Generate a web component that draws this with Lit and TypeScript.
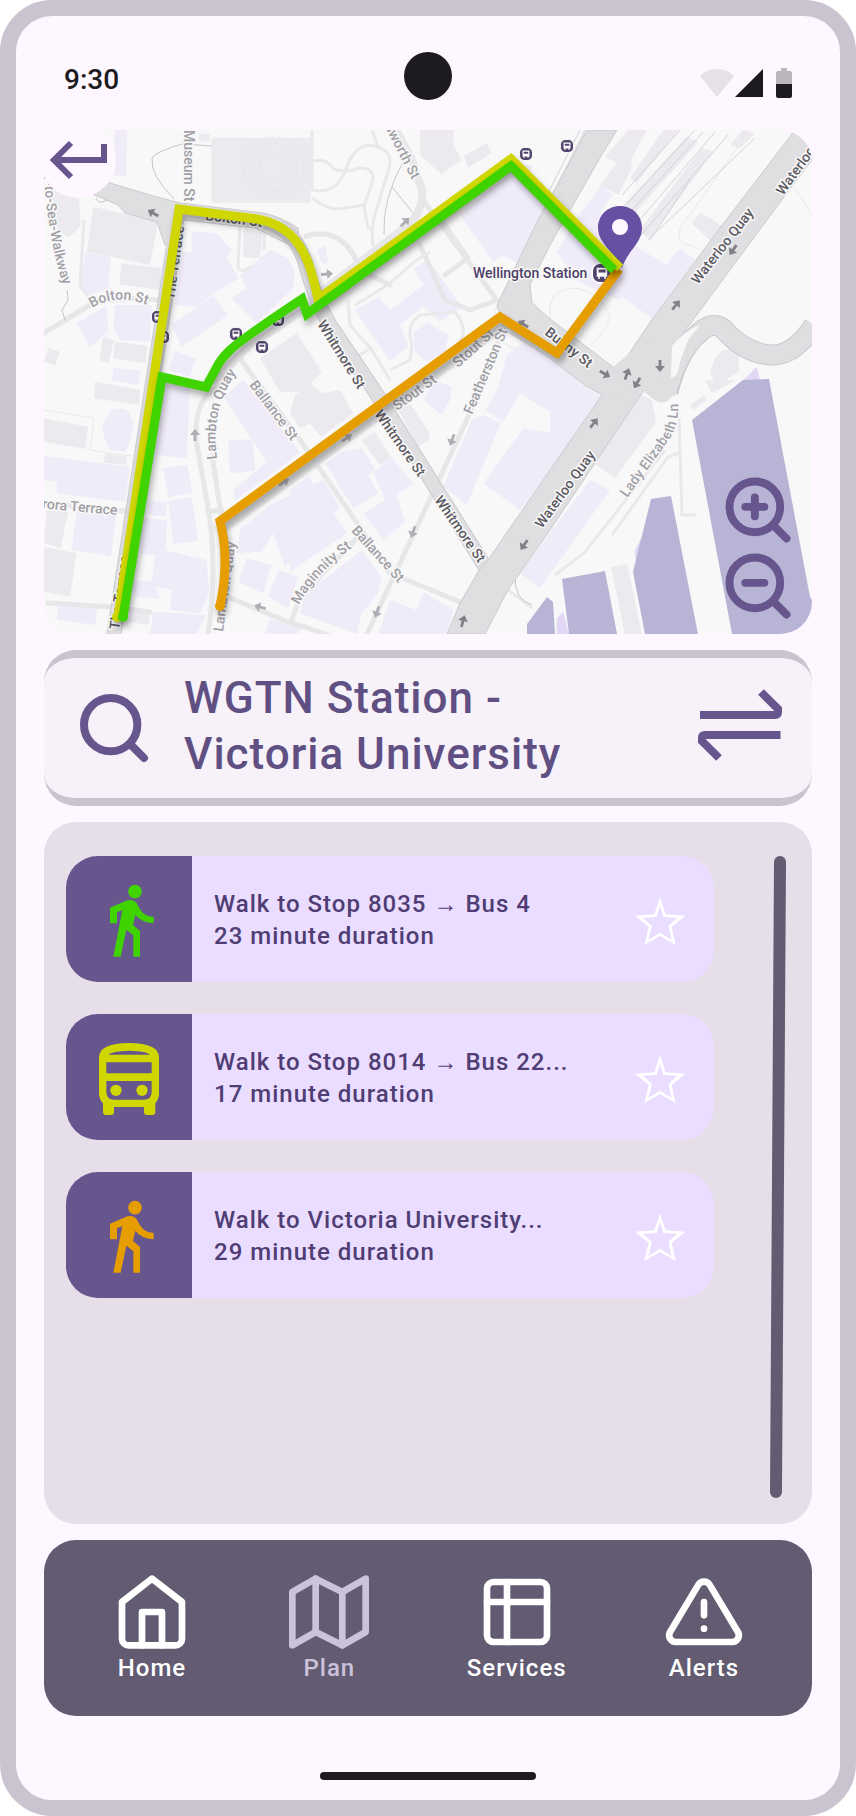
import { LitElement, html, svg, css } from "lit";
import { customElement, property } from "lit/decorators.js";

interface Trip {
  icon: "walk" | "bus";
  tone: "green" | "yellow" | "orange";
  title: string;
  duration: string;
}

const TRIPS: Trip[] = [
  { icon: "walk", tone: "green", title: "Walk to Stop 8035 → Bus 4", duration: "23 minute duration" },
  { icon: "bus", tone: "yellow", title: "Walk to Stop 8014 → Bus 22...", duration: "17 minute duration" },
  { icon: "walk", tone: "orange", title: "Walk to Victoria University...", duration: "29 minute duration" },
];

const TABS = [
  {
    label: "Home",
    current: false,
    art: svg`<path d="M3 9l9-7 9 7v11a2 2 0 0 1-2 2H5a2 2 0 0 1-2-2z"/><path d="M9 22V12h6v10"/>`,
  },
  {
    label: "Plan",
    current: true,
    art: svg`<path d="M1 6v16l7-4 8 4 7-4V2l-7 4-8-4-7 4z"/><path d="M8 2v16M16 6v16"/>`,
  },
  {
    label: "Services",
    current: false,
    art: svg`<rect x="3" y="3" width="18" height="18" rx="2"/><path d="M3 9h18M9 3v18"/>`,
  },
  {
    label: "Alerts",
    current: false,
    art: svg`<path d="M10.29 3.86L1.82 18a2 2 0 0 0 1.71 3h16.94a2 2 0 0 0 1.71-3L13.71 3.86a2 2 0 0 0-3.42 0z"/><path d="M12 9v4M12 17h.01"/>`,
  },
];

/* One-way arrows: x, y, heading in degrees clockwise from north. */
const ARROWS: [number, number, number, string][] = [
  [153, 213, -60, "dark"],
  [327, 274, 85, "mid"],
  [405, 222, 45, "mid"],
  [676, 305, 38, "dark"],
  [733, 250, 215, "dark"],
  [605, 374, 120, "dark"],
  [627, 374, 20, "dark"],
  [637, 383, 210, "dark"],
  [660, 366, 180, "dark"],
  [594, 423, 38, "dark"],
  [524, 545, 215, "dark"],
  [463, 621, 15, "dark"],
  [452, 440, 200, "mid"],
  [413, 532, 200, "mid"],
  [377, 612, 200, "mid"],
  [347, 438, 55, "mid"],
  [284, 482, 55, "mid"],
  [195, 435, 0, "mid"],
  [260, 607, -75, "mid"],
  [523, 324, -60, "dark"],
];

const STOPS: [number, number, number][] = [
  [158, 317, 6],
  [163, 337, 6],
  [236, 334, 6],
  [262, 347, 6],
  [278, 320, 6],
  [526, 154, 6],
  [567, 146, 6],
  [602, 273, 9],
];

@customElement("trip-map")
export class TripMap extends LitElement {
  static styles = css`
    :host {
      display: block;
      position: relative;
      font-family: Roboto, "Liberation Sans", sans-serif;
    }
    .map {
      display: block;
      width: 100%;
      height: auto;
      border-radius: 32px;
    }
    .land { fill: #f8f8f8; }
    .grey { fill: #eceaee; }
    .lilac { fill: #f0ebf9; }
    .violet { fill: #e2d8f6; }
    .water { fill: #b8b4d5; }
    .road { fill: #dfdfe1; stroke: #cbcad0; stroke-width: 1; }
    .fill-road { fill: #dfdfe1; }
    .street { fill: none; stroke: #e7e6e8; stroke-linecap: round; stroke-linejoin: round; stroke-width: 5; }
    .wide { stroke-width: 8; }
    .avenue { fill: none; stroke: #dfdfe1; stroke-width: 13; stroke-linejoin: round; }
    .casing { fill: none; stroke: #cbcad0; stroke-width: 15; stroke-linejoin: round; }
    .quay { stroke-width: 19; }
    .quay-casing { stroke-width: 21; }
    .track { fill: none; stroke: #d3d2d8; stroke-width: 1; }
    .path { fill: none; stroke: #c6c4cd; stroke-width: 1; }
    .lane { fill: none; stroke: #e9e9eb; stroke-width: 3; }
    .faint { stroke-width: 1; }
    .ring { fill: none; stroke: #e3e1e6; stroke-width: 1; stroke-dasharray: 3 3; }
    .name {
      font-size: 14px;
      font-weight: 500;
      fill: #a19fa6;
      stroke: #f8f8f8;
      stroke-width: 3;
      paint-order: stroke;
      stroke-linejoin: round;
    }
    .strong { fill: #5c5a62; }
    .place { fill: #4e4168; }
    .end { text-anchor: end; }
    .dark { fill: #828088; }
    .mid { fill: #b0aeb5; }
    .stop { fill: #52466f; stroke: #ffffff; stroke-width: 1; }
    .glyph { fill: #ffffff; fill-rule: evenodd; }
    .pin { fill: #6750a4; }
    .hole { fill: #fef7ff; }
    .route {
      fill: none;
      stroke-width: 9;
      stroke-linecap: butt;
      filter: drop-shadow(2px 5px 3px rgba(0, 0, 0, 0.3));
    }
    .green { stroke: #3fd300; }
    .yellow { stroke: #cfd600; }
    .orange { stroke: #e69d00; }
    .cap-green { fill: #3fd300; }
    .cap-yellow { fill: #cfd600; }
    .cap-orange { fill: #e69d00; }
    button {
      display: block;
      border: 0;
      padding: 0;
      background: none;
      color: #67558d;
      cursor: pointer;
    }
    .back {
      position: absolute;
      left: -4px;
      top: -8px;
      width: 76px;
      height: 76px;
      border-radius: 50%;
      background: #fef7ff;
    }
    .zoom {
      position: absolute;
      right: 16px;
      bottom: 10px;
    }
    .icon {
      display: block;
      width: 76px;
      height: 76px;
      fill: none;
      stroke: currentColor;
      stroke-linecap: round;
    }
    .lens { stroke-width: 2.5; }
    .arrow { stroke-width: 6; stroke-linecap: butt; }
  `;

  private arrow([x, y, heading, tone]: [number, number, number, string]) {
    return svg`<path class=${tone} transform=${`translate(${x} ${y}) rotate(${heading})`}
      d="M0 -6L5 0H1.400V6H-1.400V0H-5Z"/>`;
  }

  private stop([x, y, r]: [number, number, number]) {
    return svg`<g transform=${`translate(${x} ${y}) scale(${r / 6})`}>
      <rect class="stop" x="-6.500" y="-6.500" width="13" height="13" rx="5"/>
      <path class="glyph" d="M-3.500 -3.500H3.500V2.500H2.500V4H1.500V2.500H-1.500V4H-2.500V2.500H-3.500ZM-2.300 -2.300V-.300H2.300V-2.300Z"/>
    </g>`;
  }

  private buildings() {
    return svg`
      <g transform="translate(40 125) scale(.33333)">
        <path class="grey" d="M515 38H812V233H515ZM160 245L355 290 330 420 140 380ZM25 170L115 200 122 300 105 322 85 335 55 320ZM245 415L365 430 360 495 238 478ZM225 650L322 662 318 715 220 700ZM190 635L222 645 205 715 178 705ZM25 668L60 680 45 722 12 710ZM610 310L668 320 660 400 610 395ZM478 25L510 28 508 50 478 48ZM660 700L770 625 845 740 790 800H720Z"/>
        <path class="lilac" d="M225 15H262L258 155 215 150ZM135 382L212 395 205 490 150 510 120 490ZM455 318L530 325 575 375 560 400 597 460 520 505 470 545 405 540 425 385 455 380ZM600 450L690 375 745 400 765 440 760 490 650 595 575 520 620 490ZM395 600L520 510 563 570 425 665ZM110 595L200 540 205 620 150 665ZM225 540L335 540 330 650 240 645 220 610ZM405 678L468 700 450 755 385 735ZM220 728L300 738 295 780 215 765Z"/>
      </g>
      <g transform="translate(290 125) scale(.33333)">
        <path class="grey" d="M390 15H492L490 60 515 105 455 148 390 90ZM522 92L590 55 605 85 535 128Z"/>
        <path class="lilac" d="M195 555L265 515 300 555 400 480 370 430 415 405 515 545 450 590 400 545 330 600 355 665 300 708ZM370 625L410 592 475 630 465 680 410 710 375 680ZM510 270L665 140 775 260 690 420 640 390 610 410ZM80 375L105 362 115 410 100 420 90 400ZM650 690L700 650 860 740 860 800H620ZM660 120L725 120 725 150Z"/>
      </g>
      <g transform="translate(550 125) scale(.33333)">
        <path class="grey" d="M165 95L235 15H290L245 100 245 130 205 210 150 180 200 115ZM340 15H385L260 175 240 160ZM410 35L445 50 250 270 220 240ZM455 70L490 80 300 340 265 320ZM425 295L452 262 520 305 485 350ZM480 745L495 700 520 675 565 670 568 740 500 780ZM540 60L580 15 615 25 570 70Z"/>
        <path class="lilac" d="M155 180L190 210 150 260 200 330 350 420 390 370 435 405 305 580 215 515 205 525 85 470 20 380 80 280Z"/>
      </g>
      <g transform="translate(40 380) scale(.33333)">
        <path class="grey" d="M165 5L300 30 298 75 162 55ZM12 115L145 140 135 207 12 185ZM195 220L262 230 258 255 192 248ZM20 390L85 392 62 505 12 490ZM12 500L110 520 90 650 12 635ZM270 690L332 695 325 735 265 725Z"/>
        <path class="lilac" d="M215 90Q240 80 265 92L280 130Q278 180 255 215L210 210Q185 170 188 130ZM12 228L270 260 255 365 50 340 50 305 12 300ZM110 390L230 405 212 528 95 510ZM375 0L450 20 440 235 345 225ZM370 265L442 255 458 338 385 352ZM385 362L455 352 475 482 400 492ZM330 362L382 365 378 410 325 405ZM305 412L382 420 375 530 300 520ZM345 530L375 510 500 540 508 640 480 700 390 690 395 630 345 620 360 655 280 650 275 600 335 605ZM55 675L172 688 165 735 50 720ZM340 695L500 705 470 762H330ZM565 180L638 178 645 272 570 280ZM550 50L610 0 780 215 720 265 585 360 580 330 680 245ZM600 450L690 375 850 300 900 380 780 520 735 560 700 460 665 515 590 520ZM620 535L695 555 670 640 595 605ZM715 570L775 590 745 685 685 650ZM690 715L780 750 770 762H675Z"/>
      </g>
      <g transform="translate(290 380) scale(.33333)">
        <path class="grey" d="M15 45L60 10 100 40 150 30 190 100 95 170 60 130 30 145 0 100ZM325 90L360 72 420 160 415 180 385 200ZM215 180L255 155 305 235 270 255Z"/>
        <path class="lilac" d="M105 250L160 215 215 205 255 265 235 285 265 340 190 385ZM250 275L305 235 372 310 320 345 345 425 280 480 220 400 285 360ZM0 330L55 290 172 460 0 575ZM100 600L215 510 275 590 265 640 215 700 200 762 30 700 50 620ZM400 60L430 0 485 20 480 60 455 105ZM585 90L640 0H860L850 120 770 90 690 40 640 125ZM545 120L580 105 632 130 530 375 460 320ZM580 310L700 145 860 170 690 390ZM300 660L380 690 400 635 490 690 470 762H265ZM690 580L780 460 900 300 960 330 750 625Z"/>
      </g>
      <g transform="translate(550 380) scale(.33333)">
        <path class="grey" d="M270 42L305 60 318 125 195 295 130 250ZM420 75L462 45 470 60 430 90ZM465 0H560L485 40ZM183 562L232 553 275 762H225Z"/>
        <path class="lilac" d="M0 0H70L155 50 80 150 0 265Z"/>
        <path class="violet" d="M20 715L40 695 57 762H20ZM560 20L620 -40 635 20ZM253 515L275 470 262 560Z"/>
      </g>
      <circle class="ring" cx="274" cy="167" r="30"/>
      <circle class="ring" cx="274" cy="167" r="24"/>
      <circle class="ring" cx="274" cy="167" r="14"/>`;
  }

  private streets() {
    return svg`
      <path class="street" d="M44 333L90 305Q112 296 158 300M238 356L300 440 357 523 390 573 460 602M357 538L300 597 291 622 330 636M48 603L112 607 150 612M228 597L300 627M44 503L124 511"/>
      <path class="street" d="M222 385Q194 395 196 440L208 507Q218 570 208 634M212 455L222 520 228 590M208 512L222 510M505 325L470 413 367 634"/>
      <path class="street" d="M423 200L497 300M441 220L468 258 445 275M420 245L445 300 470 310 497 300M306 236Q345 225 360 270L390 285"/>
      <path class="street wide" d="M215 380L250 345 310 306M222 530L505 325M320 293L412 222Q424 206 422 190L412 160 396 130"/>
      <path class="lane" d="M84 220L80 285 94 305M240 225L238 268Q242 274 252 266M265 222L264 250M312 131V190M312 161Q326 158 333 168Q342 174 360 168Q374 168 373 180L364 206 368 228 373 230M345 172Q352 148 368 145Q395 148 389 168L378 205Q370 225 373 246M312 190Q332 194 340 180L345 172M312 198Q330 212 345 208L364 205M372 130L378 147M348 300L350 325 372 350 390 380M355 305Q390 285 405 270Q418 258 430 252M352 360L372 347M390 370L410 360 412 345Q405 325 420 315L455 312Q470 330 458 345"/>
      <path class="lane faint" d="M44 410L94 418 90 450 132 456M551 345L550 310Q550 290 575 288Q600 292 610 315Q608 330 590 345M680 228Q676 245 690 245L706 252M750 130L680 228M812 215Q800 195 790 182M500 300Q480 340 520 350"/>
      <path class="lane" d="M679 418L682 515H696M679 453L668 457 612 535M665 450L585 552 555 575M508 590L532 608"/>
      <path class="path" d="M174 199Q150 175 152 158Q155 152 182 144L212 146M403 162Q382 200 384 235M392 187L413 213M96 198Q98 205 107 200M67 290L68 300 62 310 65 320M515 578Q515 600 532 605"/>
      <path class="track" d="M585 130L545 210M580 130L542 205M680 130L622 195M695 130L626 205M703 132L632 210M715 132L638 222M728 135L640 236M755 138L648 240M690 180L650 240"/>`;
  }

  private mainRoads() {
    return svg`
      <path class="road" d="M100 180L150 195 180 203 255 212Q285 218 298 228L300 250 255 228 184 220 175 250 165 245 157 222 125 213 118 205 90 193Z"/>
      <path class="casing" d="M173 250L113 640"/>
      <path class="avenue" d="M175 235L113 640"/>
      <path class="casing" d="M255 219Q292 222 305 262Q315 300 330 325L374 390 486 568"/>
      <path class="avenue" d="M255 219Q292 222 305 262Q315 300 330 325L374 390 486 568"/>
      <path class="road" d="M795 130L720 228 653 318 618 370 602 395 550 470 490 557 478 572 460 603 447 634H485L508 590 550 530 642 393 673 347 795 182 812 160V130Z"/>
      <path class="casing quay-casing" d="M668 392Q678 350 700 332Q716 318 728 334Q748 354 772 355Q795 355 814 325"/>
      <path class="road" d="M587 130H617L600 158 550 245 530 285 532 303 550 319 617 370 602 395 584 385 550 358 505 330 497 305 537 222Z"/>
      <path class="fill-road" d="M612 368L645 340 672 347V365L680 382Q668 412 652 398L638 386 606 397 596 388Z"/>
      <path class="avenue quay" d="M666 394Q678 350 700 332Q716 318 728 334Q748 354 772 355Q795 355 814 325"/>
      <path class="land" d="M672 346L671 378Q678 378 680 362L688 340 700 325Q685 330 672 346Z"/>`;
  }

  private water() {
    return svg`
      <path class="water" d="M692 420L743 380 769 379 810 597 812 600V634H732ZM651 499L671 496 698 634H645L633 572ZM562 579L605 571 617 634H569ZM527 624L547 597 553 602 555 634H527Z"/>`;
  }

  private names() {
    return svg`
      <defs>
        <path id="walkway" d="M41 120L45 190Q50 245 63 285"/>
        <path id="bolton" d="M92 308Q115 293 148 305"/>
        <path id="lambton" d="M217 459Q210 405 240 368"/>
        <path id="maginnity" d="M299 605Q316 572 356 545"/>
        <path id="elizabeth" d="M627 498L668 441Q680 425 678 400"/>
      </defs>
      <text class="name" transform="translate(184 130) rotate(90)">Museum St</text>
      <text class="name end"><textPath href="#walkway" startOffset="100%">City-to-Sea-Walkway</textPath></text>
      <text class="name"><textPath href="#bolton">Bolton St</textPath></text>
      <text class="name strong" transform="translate(205 220) rotate(7)">Bolton St</text>
      <text class="name strong" transform="translate(174 300) rotate(-82)">The Terrace</text>
      <text class="name strong" transform="translate(119 630) rotate(-82)">The Terrace</text>
      <text class="name end" transform="translate(117 515) rotate(5)">Aurora Terrace</text>
      <text class="name"><textPath href="#lambton">Lambton Quay</textPath></text>
      <text class="name" transform="translate(223 632) rotate(-82)">Lambton Quay</text>
      <text class="name" transform="translate(249 385) rotate(53)">Ballance St</text>
      <text class="name" transform="translate(351 531) rotate(48)">Ballance St</text>
      <text class="name"><textPath href="#maginnity">Maginnity St</textPath></text>
      <text class="name strong" transform="translate(317 324) rotate(58)">Whitmore St</text>
      <text class="name strong" transform="translate(374 414) rotate(55)">Whitmore St</text>
      <text class="name strong" transform="translate(434 500) rotate(55)">Whitmore St</text>
      <text class="name end" transform="translate(412 180) rotate(63)">Molesworth St</text>
      <text class="name" transform="translate(397 411) rotate(-36)">Stout St</text>
      <text class="name" transform="translate(458 368) rotate(-42)">Stout St</text>
      <text class="name" transform="translate(472 415) rotate(-67)">Featherston St</text>
      <text class="name strong" transform="translate(544 334) rotate(38)">Bunny St</text>
      <text class="name strong" transform="translate(698 285) rotate(-52)">Waterloo Quay</text>
      <text class="name strong" transform="translate(783 196) rotate(-54)">Waterloo Quay</text>
      <text class="name strong" transform="translate(542 529) rotate(-54)">Waterloo Quay</text>
      <text class="name"><textPath href="#elizabeth">Lady Elizabeth Ln</textPath></text>
      <text class="name place" x="473" y="278">Wellington Station</text>`;
  }

  render() {
    return html`
      <svg class="map" viewBox="44 130 768 504" role="img" aria-label="Map of routes to Wellington Station">
        <rect class="land" x="44" y="130" width="768" height="504" />
        ${this.buildings()} ${this.streets()} ${this.mainRoads()} ${this.water()}
        ${ARROWS.map((a) => this.arrow(a))} ${this.names()} ${STOPS.map((s) => this.stop(s))}
        <path class="pin" d="M620 206C607 206 598 216 598 228C598 244 615 252 622 268C628 250 642 243 642 228C642 216 633 206 620 206Z" />
        <circle class="hole" cx="620" cy="227" r="8" />
        <g class="route">
          <path class="orange" d="M220 606Q230 560 220 521L500 317 557 353 619 269" />
          <circle class="cap-orange" cx="220" cy="606" r="5" />
        </g>
        <g class="route">
          <path class="yellow" d="M118 617L179 209 257 219C285 224 300 240 309 265Q314 280 318 299L511 159 620 268" />
          <circle class="cap-yellow" cx="117" cy="617" r="5" />
        </g>
        <g class="route">
          <path class="green" d="M123 617L162 377 206 387 219 363Q223 357 229 351 240 340 302 299L307 314 511 166 614 270" />
          <circle class="cap-green" cx="123" cy="617" r="5" />
        </g>
      </svg>
      <button class="back" type="button" aria-label="Back">
        <svg class="icon arrow" viewBox="40 122 76 76"><path d="M104 144V160H55M71 143L54 160 71 177" /></svg>
      </button>
      <div class="zoom">
        <button type="button" aria-label="Zoom in">
          <svg class="icon lens" viewBox="0 0 24 24"><circle cx="11" cy="11" r="8" /><path d="M21 21L17 17M11 8v6M8 11h6" /></svg>
        </button>
        <button type="button" aria-label="Zoom out">
          <svg class="icon lens" viewBox="0 0 24 24"><circle cx="11" cy="11" r="8" /><path d="M21 21L17 17M8 11h6" /></svg>
        </button>
      </div>
    `;
  }
}

@customElement("trip-card")
export class TripCard extends LitElement {
  @property({ attribute: false }) trip!: Trip;

  static styles = css`
    :host {
      display: block;
      font-family: Roboto, "Liberation Sans", sans-serif;
    }
    .card {
      display: flex;
      align-items: center;
      gap: 22px;
      padding-right: 28px;
      border-radius: 32px;
      overflow: hidden;
      background: #eaddff;
      color: #4f3d74;
    }
    .badge {
      flex: none;
      width: 126px;
      height: 126px;
      background: #67558d;
    }
    .green { fill: #3fd300; }
    .yellow { fill: #cfd600; }
    .orange { fill: #e69d00; }
    .text {
      flex: 1;
      min-width: 0;
      padding-top: 2px;
      font-size: 24px;
      line-height: 32px;
      font-weight: 500;
      letter-spacing: 1px;
    }
    .text p { margin: 0; }
    .star {
      flex: none;
      border: 0;
      padding: 0;
      background: none;
      cursor: pointer;
    }
    .star svg {
      display: block;
      width: 50px;
      height: 50px;
      fill: #ffffff;
      fill-rule: evenodd;
    }
  `;

  private art() {
    return this.trip.icon === "walk"
      ? html`<svg class="badge ${this.trip.tone}" viewBox="78 108 378 378" aria-hidden="true">
          <circle cx="285" cy="215" r="20.500" />
          <path d="M210 263L262 241Q281 236 291 251C303 276 315 290 341 290V310Q305 308 286 285L279 315 300 333V410H280V346L259 329 242 410H220L247 270 231 277V310H210Z" />
        </svg>`
      : html`<svg class="badge ${this.trip.tone}" viewBox="78 582 378 378" fill-rule="evenodd" aria-hidden="true">
          <path d="M177 712Q177 670 267 669 357 670 357 712V820Q357 838 346 850V876Q346 885 337 885H321Q312 885 312 876V861H222V876Q222 885 213 885H198Q189 885 189 876V850Q177 838 177 820ZM205 704H330Q320 693 267 692 215 693 205 704ZM199 727V760H335V727ZM199 783V815Q199 839 223 839H311Q335 839 335 815V783Z" />
          <circle cx="228" cy="811" r="17" /><circle cx="306" cy="811" r="17" />
        </svg>`;
  }

  render() {
    return html`<article class="card">
      ${this.art()}
      <div class="text">
        <p>${this.trip.title}</p>
        <p>${this.trip.duration}</p>
      </div>
      <button class="star" type="button" aria-label="Save trip">
        <svg viewBox="588 223 150 150" overflow="visible">
          <path d="M660 233L677 284 736 288 695 322 707 376 660 349 613 376 626 322 585 288 643 284ZM660 258L650 292 608 294 636 318 625 361 660 339 695 361 685 318 712 294 670 292Z" />
        </svg>
      </button>
    </article>`;
  }
}

@customElement("app-root")
export class AppRoot extends LitElement {
  static styles = css`
    :host {
      display: block;
      background: #ffffff;
      font-family: Roboto, "Liberation Sans", sans-serif;
      font-weight: 500;
    }
    .phone {
      box-sizing: border-box;
      min-height: 100vh;
      display: flex;
      flex-direction: column;
      border: 16px solid #cac4d0;
      border-radius: 52px;
      background: #fef7ff;
    }
    .status {
      display: grid;
      grid-template-columns: 1fr auto 1fr;
      align-items: end;
      padding: 36px 48px 20px;
      color: #1d1b20;
      font-size: 28px;
      line-height: 40px;
    }
    .camera {
      width: 48px;
      height: 48px;
      border-radius: 50%;
      background: #1d1b20;
    }
    .signals {
      display: block;
      width: 92px;
      height: 32px;
      justify-self: end;
      fill: currentColor;
    }
    .screen {
      flex: 1;
      display: flex;
      flex-direction: column;
      gap: 16px;
      padding: 10px 28px 0;
    }
    .search {
      display: flex;
      align-items: center;
      gap: 30px;
      padding: 12px 30px;
      border: solid #cac4cf;
      border-width: 8px 0;
      border-radius: 32px;
      background: #f7f1f9;
      color: #67558d;
    }
    .lens {
      flex: none;
      width: 80px;
      height: 80px;
      fill: none;
      stroke: currentColor;
      stroke-width: 2.4;
      stroke-linecap: round;
    }
    .query {
      flex: 1;
      min-width: 0;
      display: block;
      height: 116px;
      border: 0;
      padding: 0;
      margin: 0;
      resize: none;
      overflow: hidden;
      background: none;
      outline: none;
      color: #5f4f82;
      font: 500 44px/56px Roboto, "Liberation Sans", sans-serif;
      letter-spacing: 1px;
    }
    .swap {
      flex: none;
      border: 0;
      padding: 0;
      background: none;
      color: inherit;
      cursor: pointer;
    }
    .swap svg {
      display: block;
      width: 84px;
      height: 80px;
      fill: none;
      stroke: currentColor;
      stroke-width: 8;
    }
    .results {
      flex: 1;
      display: flex;
      gap: 56px;
      padding: 34px 26px 26px 22px;
      border-radius: 32px;
      background: #e6dfe9;
    }
    .trips {
      flex: 1;
      min-width: 0;
      display: flex;
      flex-direction: column;
      gap: 32px;
      margin: 0;
      padding: 0;
      list-style: none;
    }
    .scroll {
      flex: none;
      width: 16px;
      stroke: #625b71;
      stroke-width: 12;
      stroke-linecap: round;
    }
    .tabs {
      display: flex;
      justify-content: space-between;
      padding: 32px 68px;
      border-radius: 32px;
      background: #625b71;
    }
    .tab {
      display: flex;
      flex-direction: column;
      align-items: center;
      color: #ffffff;
      text-decoration: none;
      font-size: 24px;
      line-height: 32px;
      letter-spacing: 1px;
    }
    .tab svg {
      width: 80px;
      height: 80px;
      fill: none;
      stroke: currentColor;
      stroke-width: 2;
      stroke-linecap: round;
      stroke-linejoin: round;
    }
    .current { color: #ccc2dc; }
    .handle {
      width: 216px;
      height: 8px;
      margin: 56px auto 20px;
      border-radius: 4px;
      background: #1d1b20;
    }
  `;

  render() {
    return html`<div class="phone">
      <header class="status">
        <time>9:30</time>
        <span class="camera"></span>
        <svg class="signals" viewBox="0 0 92 32" aria-hidden="true">
          <path opacity=".1" d="M17 29L0 8Q7 1 17 1T34 8Z" />
          <path d="M63 1V29H35Z" />
          <path opacity=".3" d="M76 16V5Q76 3 78 3H81V0H87V3H90Q92 3 92 5V16Z" />
          <path d="M76 16H92V28Q92 30 90 30H78Q76 30 76 28Z" />
        </svg>
      </header>
      <main class="screen">
        <trip-map></trip-map>
        <form class="search" role="search">
          <svg class="lens" viewBox="0 0 24 24" aria-hidden="true"><circle cx="11" cy="11" r="8" /><path d="M21 21L17 17" /></svg>
          <textarea
            class="query"
            rows="2"
            spellcheck="false"
            aria-label="Trip from and to"
            .value=${"WGTN Station -\nVictoria University"}
          ></textarea>
          <button class="swap" type="button" aria-label="Swap start and destination">
            <svg viewBox="698 688 84 80">
              <path d="M700 715H775Q778 715 778 712V709L761 692M780.500 735H705Q702 735 702 738V741L719 758" />
            </svg>
          </button>
        </form>
        <section class="results" aria-label="Trips">
          <ul class="trips">
            ${TRIPS.map((trip) => html`<li><trip-card .trip=${trip}></trip-card></li>`)}
          </ul>
          <svg class="scroll" viewBox="0 0 16 642" preserveAspectRatio="none" aria-hidden="true">
            <path d="M10 6L6 636" />
          </svg>
        </section>
        <nav class="tabs" aria-label="Main">
          ${TABS.map(
            (tab) => html`<a class="tab ${tab.current ? "current" : ""}" href="#${tab.label.toLowerCase()}">
              <svg viewBox="0 0 24 24" aria-hidden="true">${tab.art}</svg>
              <span>${tab.label}</span>
            </a>`,
          )}
        </nav>
      </main>
      <div class="handle"></div>
    </div>`;
  }
}
